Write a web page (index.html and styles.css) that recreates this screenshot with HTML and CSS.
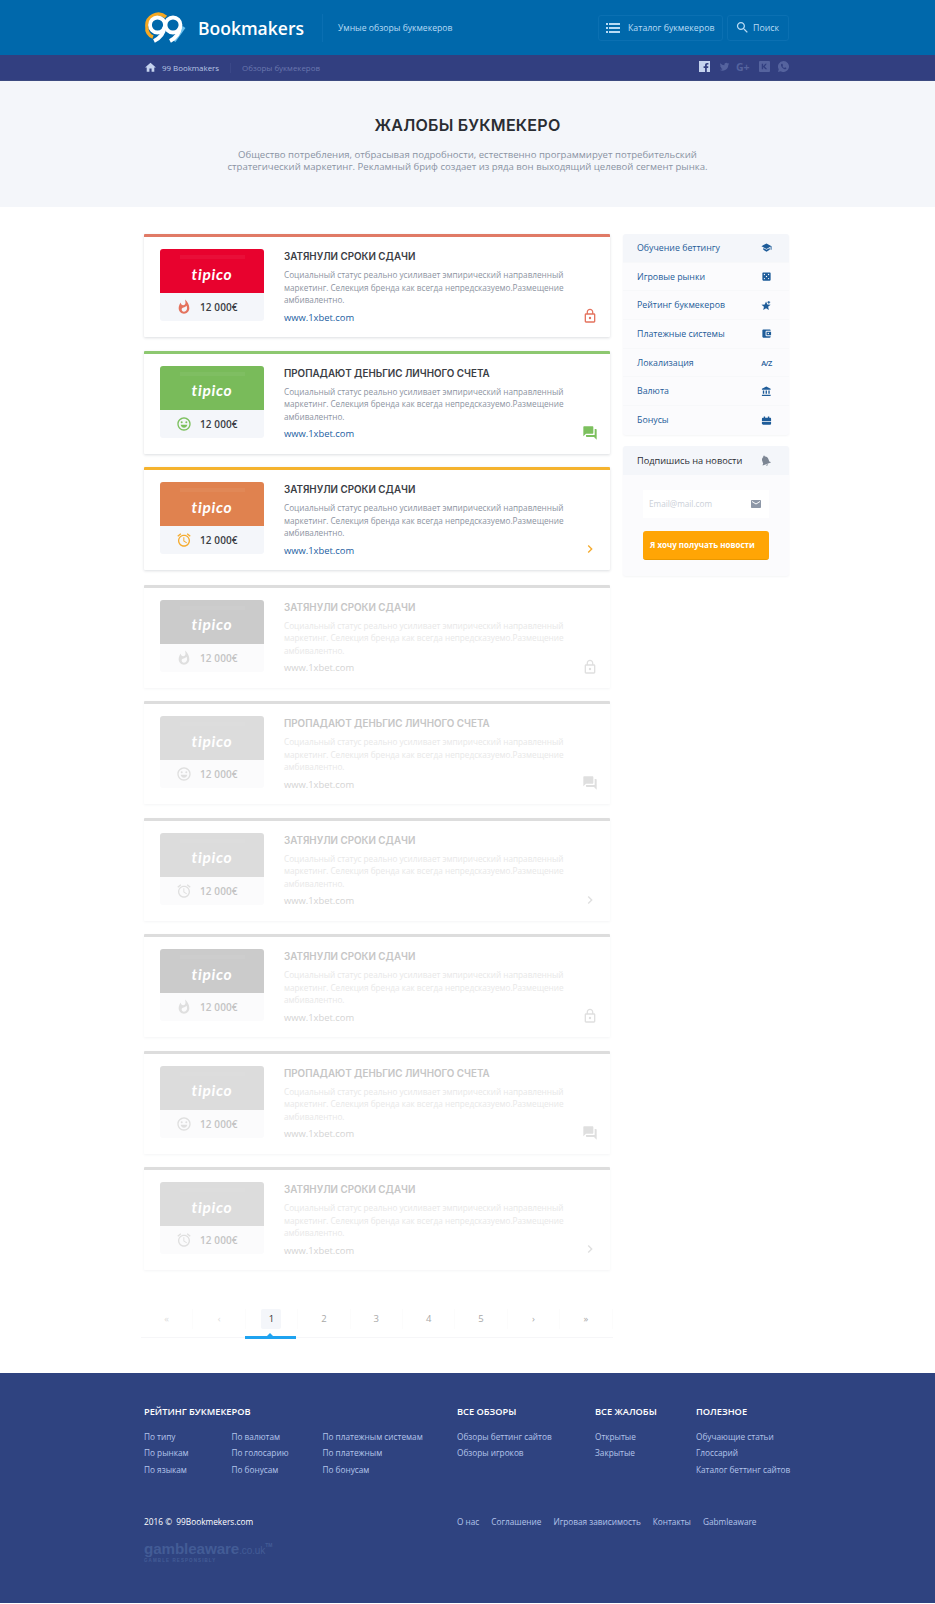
FILE: index.html
```html
<!DOCTYPE html>
<html lang="en">
<head>
  <meta charset="UTF-8" />
  <title>Жалобы букмекеров</title>
  <link rel="stylesheet" href="styles.css">
</head>
<body>

  <svg class="sprite" width="0" height="0">
    <symbol id="i-lock" viewBox="0 0 24 24"><path d="M18 8h-1V6c0-2.76-2.24-5-5-5S7 3.24 7 6v2H6c-1.1 0-2 .9-2 2v10c0 1.1.9 2 2 2h12c1.1 0 2-.9 2-2V10c0-1.1-.9-2-2-2zM8.9 6c0-1.71 1.39-3.1 3.1-3.1s3.1 1.39 3.1 3.1v2H8.9V6zM18 20H6V10h12v10z"/><circle cx="12" cy="15" r="1.8"/></symbol>
    <symbol id="i-forum" viewBox="0 0 24 24"><path d="M21 6h-2v9H6v2c0 .55.45 1 1 1h11l4 4V7c0-.55-.45-1-1-1zm-4 6V3c0-.55-.45-1-1-1H3c-.55 0-1 .45-1 1v14l4-4h10c.55 0 1-.45 1-1z"/></symbol>
    <symbol id="i-chevron" viewBox="0 0 24 24"><path d="M10 6L8.59 7.41 13.17 12l-4.58 4.59L10 18l6-6z"/></symbol>
    <symbol id="i-flame" viewBox="0 0 24 24"><path d="M13.5.67s.74 2.65.74 4.8c0 2.06-1.35 3.73-3.41 3.73-2.07 0-3.63-1.67-3.63-3.73l.03-.36C5.21 7.51 4 10.62 4 14c0 4.42 3.58 8 8 8s8-3.58 8-8C20 8.61 17.41 3.8 13.5.67zM11.71 19c-1.78 0-3.22-1.4-3.22-3.14 0-1.62 1.05-2.76 2.81-3.12 1.77-.36 3.6-1.21 4.62-2.58.39 1.29.59 2.65.59 4.04 0 2.65-2.15 4.8-4.8 4.8z"/></symbol>
    <symbol id="i-smile" viewBox="0 0 24 24"><path d="M12 2C6.47 2 2 6.5 2 12s4.47 10 10 10 10-4.5 10-10S17.53 2 12 2zm0 18c-4.42 0-8-3.58-8-8s3.58-8 8-8 8 3.58 8 8-3.58 8-8 8z"/><circle cx="8.5" cy="9.5" r="1.5"/><circle cx="15.5" cy="9.5" r="1.5"/><path d="M7 13h10c-.5 2.6-2.6 4.5-5 4.5S7.5 15.6 7 13z"/></symbol>
    <symbol id="i-alarm" viewBox="0 0 24 24"><path d="M22 5.72l-4.6-3.86-1.29 1.53 4.6 3.86L22 5.72zM7.88 3.39L6.6 1.86 2 5.71l1.29 1.53 4.59-3.85zM12.5 8H11v6l4.75 2.85.75-1.23-4-2.37V8zM12 4c-4.97 0-9 4.03-9 9s4.03 9 9 9c4.97 0 9-4.03 9-9s-4.03-9-9-9zm0 16c-3.87 0-7-3.13-7-7s3.13-7 7-7 7 3.13 7 7-3.13 7-7 7z"/></symbol>
    <symbol id="i-school" viewBox="0 0 24 24"><path d="M5 13.18v4L12 21l7-3.82v-4L12 17l-7-3.82zM12 3L1 9l11 6 9-4.91V17h2V9L12 3z"/></symbol>
    <symbol id="i-dice" viewBox="0 0 24 24"><path d="M19 3H5c-1.1 0-2 .9-2 2v14c0 1.1.9 2 2 2h14c1.1 0 2-.9 2-2V5c0-1.1-.9-2-2-2zM7.5 18c-.83 0-1.5-.67-1.5-1.5S6.67 15 7.5 15s1.5.67 1.5 1.5S8.33 18 7.5 18zm0-9C6.67 9 6 8.33 6 7.5S6.67 6 7.5 6 9 6.67 9 7.5 8.33 9 7.5 9zm4.5 4.5c-.83 0-1.5-.67-1.5-1.5s.67-1.5 1.5-1.5 1.5.67 1.5 1.5-.67 1.5-1.5 1.5zm4.5 4.5c-.83 0-1.5-.67-1.5-1.5s.67-1.5 1.5-1.5 1.5.67 1.5 1.5-.67 1.5-1.5 1.5zm0-9c-.83 0-1.5-.67-1.5-1.5S15.67 6 16.5 6s1.5.67 1.5 1.5S17.33 9 16.5 9z"/></symbol>
    <symbol id="i-star" viewBox="0 0 24 24"><path d="M11 18.27L17.18 22l-1.64-7.03L21 10.24l-7.19-.61L11 3 8.19 9.63 1 10.24l5.46 4.73L4.82 22z"/><path d="M16 2h2v2h2v2h-2v2h-2V6h-2V4h2z"/></symbol>
    <symbol id="i-wallet" viewBox="0 0 24 24"><path d="M21 18v1c0 1.1-.9 2-2 2H5c-1.11 0-2-.9-2-2V5c0-1.1.89-2 2-2h14c1.1 0 2 .9 2 2v1h-9c-1.11 0-2 .9-2 2v8c0 1.1.89 2 2 2h9zm-9-2h10V8H12v8zm4-2.5c-.83 0-1.5-.67-1.5-1.5s.67-1.5 1.5-1.5 1.5.67 1.5 1.5-.67 1.5-1.5 1.5z"/></symbol>
    <symbol id="i-bank" viewBox="0 0 24 24"><path d="M4 10v7h3v-7H4zm6 0v7h3v-7h-3zM2 22h19v-3H2v3zm14-12v7h3v-7h-3zm-4.5-9L2 6v2h19V6l-9.5-5z"/></symbol>
    <symbol id="i-box" viewBox="0 0 24 24"><path d="M20 6h-2V3h-3v3H9V3H6v3H4c-1.11 0-1.99.89-1.99 2L2 19c0 1.11.89 2 2 2h16c1.11 0 2-.89 2-2V8c0-1.11-.89-2-2-2zM2 13h20v1.5H2z"/></symbol>
    <symbol id="i-bell" viewBox="0 0 24 24"><path d="M12 22c1.1 0 2-.9 2-2h-4c0 1.1.89 2 2 2zm6-6v-5c0-3.07-1.64-5.64-4.5-6.32V4c0-.83-.67-1.5-1.5-1.5s-1.5.67-1.5 1.5v.68C7.63 5.36 6 7.92 6 11v5l-2 2v1h16v-1l-2-2z"/></symbol>
    <symbol id="i-mail" viewBox="0 0 24 24"><path d="M20 4H4c-1.1 0-1.99.9-1.99 2L2 18c0 1.1.9 2 2 2h16c1.1 0 2-.9 2-2V6c0-1.1-.9-2-2-2zm0 4l-8 5-8-5V6l8 5 8-5v2z"/></symbol>
  </svg>

  <header class="header">
    <div class="wrap header-row">
      <a class="logo" href="#">
        <svg class="logo-mark" viewBox="0 0 42 32" width="42" height="32">
          <path d="M3 15 A11.5 11.5 0 0 1 22 5" fill="none" stroke="#f6a821" stroke-width="3.5"/>
          <path d="M3 15 A9 9 0 0 0 9 25" fill="none" stroke="#f6a821" stroke-width="3.5"/>
          <path d="M30 29 L40 15" fill="none" stroke="#6cc1ee" stroke-width="3.5"/>
          <circle cx="13.5" cy="13" r="7.5" fill="none" stroke="#fff" stroke-width="3.8"/>
          <path d="M20.5 15 C20 21 16 26 10 29" fill="none" stroke="#fff" stroke-width="3.8"/>
          <circle cx="29" cy="13" r="7.5" fill="none" stroke="#fff" stroke-width="3.8"/>
          <path d="M36 15 C35.5 21 31.5 26 26 29" fill="none" stroke="#fff" stroke-width="3.8"/>
        </svg>
        <span class="logo-text">Bookmakers</span>
      </a>
      <span class="tagline">Умные обзоры букмекеров</span>
      <nav class="header-nav">
        <a class="nav-btn nav-catalog" href="#">
          <svg class="nav-list" viewBox="0 0 14 10" width="14" height="10"><path d="M0 0h2v2H0zM3 0h11v2H3zM0 4h2v2H0zM3 4h11v2H3zM0 8h2v2H0zM3 8h11v2H3z"/></svg>
          Каталог букмекеров
        </a>
        <a class="nav-btn nav-search" href="#">
          <svg viewBox="0 0 24 24" width="15" height="15"><path d="M15.5 14h-.79l-.28-.27C15.41 12.59 16 11.11 16 9.5 16 5.91 13.09 3 9.5 3S3 5.91 3 9.5 5.91 16 9.5 16c1.61 0 3.09-.59 4.23-1.57l.27.28v.79l5 4.99L20.49 19l-4.99-5zm-6 0C7.01 14 5 11.99 5 9.5S7.01 5 9.5 5 14 7.01 14 9.5 11.99 14 9.5 14z"/></svg>
          Поиск
        </a>
      </nav>
    </div>
  </header>

  <div class="crumbs">
    <div class="wrap crumbs-row">
      <svg class="crumb-home" viewBox="0 0 24 24" width="13" height="13"><path d="M10 20v-6h4v6h5v-8h3L12 3 2 12h3v8z"/></svg>
      <a class="crumb" href="#">99 Bookmakers</a>
      <a class="crumb crumb-muted" href="#">Обзоры букмекеров</a>
      <div class="socials">
        <svg class="soc soc-on" viewBox="0 0 12 12"><path d="M0 0h12v12H8.5V7.5H10l.2-1.8H8.5V4.6c0-.5.2-.8.8-.8h1V2.2H8.800C7.400 2.200 6.600 3 6.600 4.400v1.300H5v1.800h1.600V12H0z"/></svg>
        <svg class="soc" viewBox="0 0 24 24"><path d="M22.46 6c-.77.35-1.6.58-2.46.69.88-.53 1.56-1.37 1.88-2.38-.83.5-1.75.85-2.72 1.05C18.37 4.5 17.26 4 16 4c-2.35 0-4.27 1.92-4.27 4.29 0 .34.04.67.11.98C8.28 9.09 5.11 7.38 3 4.79c-.37.63-.58 1.37-.58 2.15 0 1.49.75 2.81 1.91 3.56-.71 0-1.37-.2-1.95-.5v.03c0 2.08 1.48 3.82 3.44 4.21a4.22 4.22 0 0 1-1.93.07 4.28 4.28 0 0 0 4 2.98 8.521 8.521 0 0 1-5.33 1.84c-.34 0-.68-.02-1.02-.06C3.44 20.29 5.7 21 8.12 21 16 21 20.33 14.46 20.33 8.79c0-.19 0-.37-.01-.56.84-.6 1.56-1.36 2.14-2.23z"/></svg>
        <span class="soc-gplus">G+</span>
        <svg class="soc" viewBox="0 0 12 12"><path d="M1 0h10a1 1 0 0 1 1 1v10a1 1 0 0 1-1 1H1a1 1 0 0 1-1-1V1a1 1 0 0 1 1-1zm2 3v6h1.5V6.5L7 9h2L6.2 6 8.6 3H6.800L4.5 5.7V3z"/></svg>
        <svg class="soc" viewBox="0 0 12 12"><path d="M6 0a6 6 0 1 1-3 11.200L0 12l.8-3A6 6 0 0 1 6 0zM4 3c-.8.5-1 1.500-.4 2.800.7 1.500 2 2.800 3.600 3.200 1 .2 1.900-.3 2-1.300L7.700 6.900l-.8.7C6 7.200 5.200 6.300 4.800 5.400l.7-.8L4.700 3z"/></svg>
      </div>
    </div>
  </div>

  <section class="hero">
    <h1>ЖАЛОБЫ БУКМЕКЕРО</h1>
    <p>Общество потребления, отбрасывая подробности, естественно программирует потребительский<br>стратегический маркетинг. Рекламный бриф создает из ряда вон выходящий целевой сегмент рынка.</p>
  </section>

  <div class="wrap content">
    <main class="main">

      <article class="card card-red">
        <div class="brand">
          <div class="brand-logo"><span>tipico</span></div>
          <div class="brand-sum"><svg class="sum-icon"><use href="#i-flame"/></svg><b>12 000€</b></div>
        </div>
        <div class="card-body">
          <h3>ЗАТЯНУЛИ СРОКИ СДАЧИ</h3>
          <p>Социальный статус реально усиливает эмпирический направленный маркетинг. Селекция бренда как всегда непредсказуемо.Размещение амбивалентно.</p>
          <a href="#">www.1xbet.com</a>
        </div>
        <svg class="status"><use href="#i-lock"/></svg>
      </article>

      <article class="card card-green">
        <div class="brand">
          <div class="brand-logo"><span>tipico</span></div>
          <div class="brand-sum"><svg class="sum-icon"><use href="#i-smile"/></svg><b>12 000€</b></div>
        </div>
        <div class="card-body">
          <h3>ПРОПАДАЮТ ДЕНЬГИС ЛИЧНОГО СЧЕТА</h3>
          <p>Социальный статус реально усиливает эмпирический направленный маркетинг. Селекция бренда как всегда непредсказуемо.Размещение амбивалентно.</p>
          <a href="#">www.1xbet.com</a>
        </div>
        <svg class="status"><use href="#i-forum"/></svg>
      </article>

      <article class="card card-orange">
        <div class="brand">
          <div class="brand-logo"><span>tipico</span></div>
          <div class="brand-sum"><svg class="sum-icon"><use href="#i-alarm"/></svg><b>12 000€</b></div>
        </div>
        <div class="card-body">
          <h3>ЗАТЯНУЛИ СРОКИ СДАЧИ</h3>
          <p>Социальный статус реально усиливает эмпирический направленный маркетинг. Селекция бренда как всегда непредсказуемо.Размещение амбивалентно.</p>
          <a href="#">www.1xbet.com</a>
        </div>
        <svg class="status"><use href="#i-chevron"/></svg>
      </article>

      <article class="card card-off card-dark">
        <div class="brand">
          <div class="brand-logo"><span>tipico</span></div>
          <div class="brand-sum"><svg class="sum-icon"><use href="#i-flame"/></svg><b>12 000€</b></div>
        </div>
        <div class="card-body">
          <h3>ЗАТЯНУЛИ СРОКИ СДАЧИ</h3>
          <p>Социальный статус реально усиливает эмпирический направленный маркетинг. Селекция бренда как всегда непредсказуемо.Размещение амбивалентно.</p>
          <a href="#">www.1xbet.com</a>
        </div>
        <svg class="status"><use href="#i-lock"/></svg>
      </article>

      <article class="card card-off">
        <div class="brand">
          <div class="brand-logo"><span>tipico</span></div>
          <div class="brand-sum"><svg class="sum-icon"><use href="#i-smile"/></svg><b>12 000€</b></div>
        </div>
        <div class="card-body">
          <h3>ПРОПАДАЮТ ДЕНЬГИС ЛИЧНОГО СЧЕТА</h3>
          <p>Социальный статус реально усиливает эмпирический направленный маркетинг. Селекция бренда как всегда непредсказуемо.Размещение амбивалентно.</p>
          <a href="#">www.1xbet.com</a>
        </div>
        <svg class="status"><use href="#i-forum"/></svg>
      </article>

      <article class="card card-off">
        <div class="brand">
          <div class="brand-logo"><span>tipico</span></div>
          <div class="brand-sum"><svg class="sum-icon"><use href="#i-alarm"/></svg><b>12 000€</b></div>
        </div>
        <div class="card-body">
          <h3>ЗАТЯНУЛИ СРОКИ СДАЧИ</h3>
          <p>Социальный статус реально усиливает эмпирический направленный маркетинг. Селекция бренда как всегда непредсказуемо.Размещение амбивалентно.</p>
          <a href="#">www.1xbet.com</a>
        </div>
        <svg class="status"><use href="#i-chevron"/></svg>
      </article>

      <article class="card card-off card-dark">
        <div class="brand">
          <div class="brand-logo"><span>tipico</span></div>
          <div class="brand-sum"><svg class="sum-icon"><use href="#i-flame"/></svg><b>12 000€</b></div>
        </div>
        <div class="card-body">
          <h3>ЗАТЯНУЛИ СРОКИ СДАЧИ</h3>
          <p>Социальный статус реально усиливает эмпирический направленный маркетинг. Селекция бренда как всегда непредсказуемо.Размещение амбивалентно.</p>
          <a href="#">www.1xbet.com</a>
        </div>
        <svg class="status"><use href="#i-lock"/></svg>
      </article>

      <article class="card card-off">
        <div class="brand">
          <div class="brand-logo"><span>tipico</span></div>
          <div class="brand-sum"><svg class="sum-icon"><use href="#i-smile"/></svg><b>12 000€</b></div>
        </div>
        <div class="card-body">
          <h3>ПРОПАДАЮТ ДЕНЬГИС ЛИЧНОГО СЧЕТА</h3>
          <p>Социальный статус реально усиливает эмпирический направленный маркетинг. Селекция бренда как всегда непредсказуемо.Размещение амбивалентно.</p>
          <a href="#">www.1xbet.com</a>
        </div>
        <svg class="status"><use href="#i-forum"/></svg>
      </article>

      <article class="card card-off">
        <div class="brand">
          <div class="brand-logo"><span>tipico</span></div>
          <div class="brand-sum"><svg class="sum-icon"><use href="#i-alarm"/></svg><b>12 000€</b></div>
        </div>
        <div class="card-body">
          <h3>ЗАТЯНУЛИ СРОКИ СДАЧИ</h3>
          <p>Социальный статус реально усиливает эмпирический направленный маркетинг. Селекция бренда как всегда непредсказуемо.Размещение амбивалентно.</p>
          <a href="#">www.1xbet.com</a>
        </div>
        <svg class="status"><use href="#i-chevron"/></svg>
      </article>

      <nav class="pager">
        <a href="#">«</a>
        <a href="#">‹</a>
        <a class="current" href="#"><span>1</span></a>
        <a href="#">2</a>
        <a href="#">3</a>
        <a href="#">4</a>
        <a href="#">5</a>
        <a href="#">›</a>
        <a href="#">»</a>
      </nav>
    </main>

    <aside class="side">
      <ul class="side-menu">
        <li class="active"><a href="#">Обучение беттингу</a><svg><use href="#i-school"/></svg></li>
        <li><a href="#">Игровые рынки</a><svg><use href="#i-dice"/></svg></li>
        <li><a href="#">Рейтинг букмекеров</a><svg><use href="#i-star"/></svg></li>
        <li><a href="#">Платежные системы</a><svg><use href="#i-wallet"/></svg></li>
        <li><a href="#">Локализация</a><span class="az">A/Z</span></li>
        <li><a href="#">Валюта</a><svg><use href="#i-bank"/></svg></li>
        <li><a href="#">Бонусы</a><svg><use href="#i-box"/></svg></li>
      </ul>

      <div class="subscribe">
        <div class="subscribe-head">Подпишись на новости <svg><use href="#i-bell"/></svg></div>
        <div class="subscribe-body">
          <div class="email-field"><span>Email@mail.com</span><svg><use href="#i-mail"/></svg></div>
          <button>Я хочу получать новости</button>
        </div>
      </div>
    </aside>
  </div>

  <footer class="footer">
    <div class="wrap">
      <div class="footer-links">
        <div class="f-rating">
          <h4>РЕЙТИНГ БУКМЕКЕРОВ</h4>
          <div class="f-rating-cols">
            <ul>
              <li><a href="#">По типу</a></li>
              <li><a href="#">По рынкам</a></li>
              <li><a href="#">По языкам</a></li>
            </ul>
            <ul>
              <li><a href="#">По валютам</a></li>
              <li><a href="#">По голосарию</a></li>
              <li><a href="#">По бонусам</a></li>
            </ul>
            <ul>
              <li><a href="#">По платежным системам</a></li>
              <li><a href="#">По платежным</a></li>
              <li><a href="#">По бонусам</a></li>
            </ul>
          </div>
        </div>
        <div class="f-reviews">
          <h4>ВСЕ ОБЗОРЫ</h4>
          <ul>
            <li><a href="#">Обзоры беттинг сайтов</a></li>
            <li><a href="#">Обзоры игроков</a></li>
          </ul>
        </div>
        <div class="f-claims">
          <h4>ВСЕ ЖАЛОБЫ</h4>
          <ul>
            <li><a href="#">Открытые</a></li>
            <li><a href="#">Закрытые</a></li>
          </ul>
        </div>
        <div class="f-useful">
          <h4>ПОЛЕЗНОЕ</h4>
          <ul>
            <li><a href="#">Обучающие статьи</a></li>
            <li><a href="#">Глоссарий</a></li>
            <li><a href="#">Каталог беттинг сайтов</a></li>
          </ul>
        </div>
      </div>

      <div class="footer-bottom">
        <div class="f-copy">
          <p>2016 ©&nbsp; 99Bookmekers.com</p>
          <div class="gamble">
            <span class="gamble-name">gambleaware<small>.co.uk</small><sup>TM</sup></span>
            <span class="gamble-sub">GAMBLE RESPONSIBLY</span>
          </div>
        </div>
        <div class="f-bottom-links">
          <a href="#">О нас</a>
          <a href="#">Соглашение</a>
          <a href="#">Игровая зависимость</a>
          <a href="#">Контакты</a>
          <a href="#">Gabmleaware</a>
        </div>
      </div>
    </div>
  </footer>

</body>
</html>
```

FILE: styles.css
```css
body {
  margin: 0;
  font-family: 'Open Sans', sans-serif;
  background-color: #fff;
  color: #333;
}

a {
  text-decoration: none;
  color: inherit;
}

ul {
  list-style: none;
  margin: 0;
  padding: 0;
}

.sprite {
  display: block;
  height: 0;
}

.wrap {
  width: 645px;
  margin-left: 144px;
}

/* header */

.header {
  background-color: #0068ab;
  height: 55px;
}

.header-row {
  display: flex;
  align-items: center;
  height: 55px;
}

.logo {
  display: flex;
  align-items: center;
  width: 178px;
  border-right: 1px solid #0a6fb2;
  height: 28px;
}

.logo-mark {
  margin-right: 12px;
}

.logo-text {
  font-size: 17.5px;
  font-weight: 600;
  color: #fff;
}

.tagline {
  margin-left: 15px;
  font-size: 8.65px;
  color: #b9dbf5;
}

.header-nav {
  margin-left: auto;
  display: flex;
  gap: 4px;
}

.nav-btn {
  display: flex;
  align-items: center;
  height: 26px;
  border: 1px solid #0b70b2;
  border-radius: 3px;
  font-size: 8.8px;
  color: #b9dbf5;
  box-sizing: border-box;
  white-space: nowrap;
}

.nav-btn svg {
  fill: #b9dbf5;
}

.nav-catalog {
  width: 125px;
  padding-left: 7px;
  gap: 8px;
}

.nav-search {
  width: 62px;
  padding-left: 7px;
  gap: 3px;
}

/* breadcrumbs */

.crumbs {
  background-color: #323f80;
  height: 26px;
  border-bottom: 1px solid #3c4a80;
  box-sizing: border-box;
}

.crumbs-row {
  display: flex;
  align-items: center;
  height: 25px;
  font-size: 7.9px;
}

.crumb-home {
  fill: #c5d3ee;
  margin-right: 5px;
}

.crumb {
  color: #b9c6e4;
  padding-right: 11px;
  margin-right: 11px;
  border-right: 1px solid #3b4888;
}

.crumb-muted {
  color: #6a77ae;
  border: none;
}

.socials {
  margin-left: auto;
  margin-top: -2px;
  display: flex;
  align-items: center;
  gap: 8.5px;
}

.soc {
  width: 11px;
  height: 11px;
  fill: #55639e;
}

.soc-on {
  fill: #c5d3ee;
}

.soc-gplus {
  font-size: 10.5px;
  font-weight: 700;
  color: #55639e;
  width: 16px;
  margin: 0 -2px;
}

/* hero */

.hero {
  background-color: #f4f6fa;
  height: 126px;
  box-sizing: border-box;
  padding-top: 34px;
  text-align: center;
}

.hero h1 {
  margin: 0 0 14px 0;
  font-family: 'Inter', sans-serif;
  font-size: 16.1px;
  line-height: 20px;
  font-weight: 600;
  color: #2a2d33;
  letter-spacing: 0.2px;
}

.hero p {
  margin: 0;
  font-size: 9.58px;
  line-height: 12.4px;
  color: #8a93a3;
}

/* layout */

.content {
  display: flex;
  gap: 13px;
  padding-top: 27px;
  align-items: flex-start;
}

.main {
  width: 466px;
}

.side {
  width: 166px;
}

/* complaint cards */

.card {
  display: flex;
  box-sizing: border-box;
  height: 103px;
  margin-bottom: 13.5px;
  padding: 12px 12px 0 16px;
  background: #fff;
  border-top: 3px solid #ddd;
  border-radius: 1px;
  box-shadow: 0 1px 3px rgba(40, 50, 70, 0.16);
}

.card-orange {
  margin-bottom: 14.5px;
}

.brand {
  width: 104px;
  height: 72px;
  flex: none;
  margin-right: 20px;
}

.brand-logo {
  position: relative;
  height: 44px;
  border-radius: 3px 3px 0 0;
  display: flex;
  align-items: center;
  justify-content: center;
  color: #fff;
}

/* the faint strip at the top of the logo picture */
.brand-logo::before {
  content: "";
  position: absolute;
  left: 20px;
  top: 6px;
  width: 65px;
  height: 4px;
  background: rgba(255, 255, 255, 0.05);
}

.brand-logo span {
  font-family: 'Lato', sans-serif;
  font-size: 15.5px;
  font-weight: 700;
  font-style: italic;
  letter-spacing: 0.7px;
  padding-top: 5px;
}

.brand-sum {
  height: 28px;
  background: #f4f6fa;
  border-radius: 0 0 3px 3px;
  display: flex;
  align-items: center;
  padding-left: 16px;
  box-sizing: border-box;
}

.sum-icon {
  width: 16px;
  height: 16px;
  margin-right: 8px;
}

.brand-sum b {
  font-size: 10px;
  font-weight: 600;
  color: #3a3d44;
  letter-spacing: 0.1px;
}

.card-body {
  flex: 1;
  padding-top: 1px;
}

.card-body h3 {
  margin: 0 0 5px 0;
  font-family: 'Inter', sans-serif;
  font-size: 9.8px;
  line-height: 14px;
  font-weight: 600;
  color: #3a3d44;
}

.card-body p {
  margin: 0 0 4px 0;
  font-size: 8.2px;
  line-height: 12.6px;
  color: #8d94a2;
}

.card-body a {
  display: block;
  font-size: 9.4px;
  line-height: 14px;
  color: #22609f;
}

.status {
  flex: none;
  width: 16px;
  height: 16px;
  align-self: flex-end;
  margin-bottom: 13px;
}

.card-red {
  border-top-color: #e07a66;
}

.card-red .brand-logo {
  background: #e8022e;
}

.card-red svg {
  fill: #e4735e;
}

.card-green {
  border-top-color: #8dc870;
}

.card-green .brand-logo {
  background: #79bb5a;
}

.card-green svg {
  fill: #7cc05e;
}

.card-orange {
  border-top-color: #f5b32e;
}

.card-orange .brand-logo {
  background: #e0824f;
}

.card-orange svg {
  fill: #f5ab2e;
}

.card-off {
  box-shadow: 0 1px 3px rgba(40, 50, 70, 0.05);
}

.card-off .brand-logo {
  background: #dcdcdc;
}

.card-dark .brand-logo {
  background: #cbcbcb;
}

.card-off .brand-sum {
  background: #fbfbfc;
}

.card-off svg {
  fill: #dfdfdf;
}

.card-off .brand-sum b {
  color: #c4c4c4;
}

.card-off .card-body h3 {
  color: #c6c6c6;
}

.card-off .card-body p {
  color: #e8e8e8;
}

.card-off .card-body a {
  color: #d4d4d4;
}

/* pagination */

.pager {
  display: grid;
  grid-template-columns: repeat(9, 52.4px);
  margin: 25px 0 35px -3px;
  width: 472px;
  height: 43px;
  box-sizing: border-box;
  border-bottom: 1px solid #f6f6f8;
  font-size: 9.5px;
  padding-top: 14px;
}

.pager a {
  display: flex;
  justify-content: center;
  align-items: flex-start;
  height: 20px;
  line-height: 20px;
  color: #a8a8a8;
  border-right: 1px solid #fcfcfc;
  position: relative;
}

.pager a:nth-child(-n+2) {
  color: #dcdcdc;
}

.pager a span {
  display: block;
  width: 20px;
  text-align: center;
  background: #f4f6fa;
  border-radius: 2px;
  color: #333;
}

.pager .current::after {
  content: "";
  position: absolute;
  left: -1px;
  top: 27px;
  width: 51px;
  height: 3px;
  background: #1fa3f0;
}

.pager .current::before {
  content: "";
  position: absolute;
  left: 21px;
  top: 24px;
  border: 3px solid transparent;
  border-top: none;
  border-bottom-color: #1fa3f0;
}

/* sidebar */

.side-menu {
  background: #fbfbfd;
  border-radius: 3px;
  box-shadow: 0 1px 2px rgba(40, 50, 70, 0.05);
  margin-bottom: 11px;
}

.side-menu li {
  display: flex;
  align-items: center;
  justify-content: space-between;
  height: 28.7px;
  padding: 0 17px 0 14px;
  font-size: 8.8px;
  color: #1e5c99;
  border-bottom: 1px solid #f7f8fa;
  box-sizing: border-box;
}

.side-menu li:last-child {
  border-bottom: none;
}

.side-menu .active {
  background: #f4f6fa;
  border-radius: 3px 3px 0 0;
}

.side-menu svg {
  width: 11px;
  height: 11px;
  fill: #1e5c99;
}

.az {
  font-size: 7.5px;
  font-weight: 600;
  letter-spacing: -0.5px;
  width: 11px;
  text-align: center;
}

.subscribe {
  background: #fbfbfd;
  border-radius: 3px;
  height: 130px;
  box-shadow: 0 1px 2px rgba(40, 50, 70, 0.05);
}

.subscribe-head {
  display: flex;
  align-items: center;
  justify-content: space-between;
  background: #f4f6fa;
  height: 29px;
  padding: 0 17px 0 14px;
  font-size: 9.2px;
  color: #2a2d33;
  border-radius: 3px 3px 0 0;
}

.subscribe-head svg {
  width: 13px;
  height: 13px;
  fill: #7d8694;
  transform: rotate(-20deg);
}

.subscribe-body {
  padding: 15px 20px 0 20px;
}

.email-field {
  display: flex;
  align-items: center;
  justify-content: space-between;
  height: 28px;
  background: #fff;
  padding: 0 7px 0 6px;
  font-size: 8.2px;
  color: #cbd0d8;
}

.email-field svg {
  width: 12px;
  height: 12px;
  fill: #8d97a7;
}

.subscribe-body button {
  display: block;
  width: 100%;
  height: 29px;
  margin-top: 13px;
  padding: 0 0 0 7px;
  text-align: left;
  background-color: #ffa505;
  border: none;
  border-bottom: 1px solid #ea9800;
  border-radius: 3px;
  color: #fff;
  font-family: 'Open Sans', sans-serif;
  font-size: 8px;
  font-weight: 700;
  cursor: pointer;
}

/* footer */

.footer {
  background-color: #2f4380;
  height: 230px;
  box-sizing: border-box;
  padding-top: 32px;
  color: #fff;
}

.footer-links {
  display: flex;
  height: 110px;
}

.footer h4 {
  margin: 0 0 10px 0;
  font-size: 9.25px;
  line-height: 14px;
  font-weight: 600;
  color: #fff;
  white-space: nowrap;
}

.footer li {
  font-size: 8.25px;
  line-height: 16.4px;
  color: #b4c4ea;
  white-space: nowrap;
}

.f-rating {
  flex: none;
  width: 313px;
}

.f-rating-cols {
  display: grid;
  grid-template-columns: 87.5px 91px auto;
}

.f-reviews {
  flex: none;
  width: 138px;
}

.f-claims {
  flex: none;
  width: 101px;
}

.f-useful {
  flex: none;
}

.footer-bottom {
  display: flex;
}

.f-copy {
  width: 313px;
}

.f-copy p {
  margin: 0 0 13px 0;
  font-size: 8.3px;
  line-height: 14px;
}

.gamble {
  display: flex;
  flex-direction: column;
  color: #435c96;
}

.gamble-name {
  font-family: 'Liberation Sans', sans-serif;
  font-size: 15.2px;
  font-weight: 700;
  line-height: 14px;
  letter-spacing: -0.1px;
}

.gamble-name small {
  font-size: 10px;
  font-weight: 400;
}

.gamble-name sup {
  font-size: 5px;
  vertical-align: 7px;
  line-height: 0;
}

.gamble-sub {
  font-family: 'Liberation Sans', sans-serif;
  font-size: 4.5px;
  line-height: 6px;
  letter-spacing: 1.1px;
  font-weight: 700;
}

.f-bottom-links {
  display: flex;
  gap: 12px;
  font-size: 8.25px;
  line-height: 14px;
  color: #b4c4ea;
}
```
